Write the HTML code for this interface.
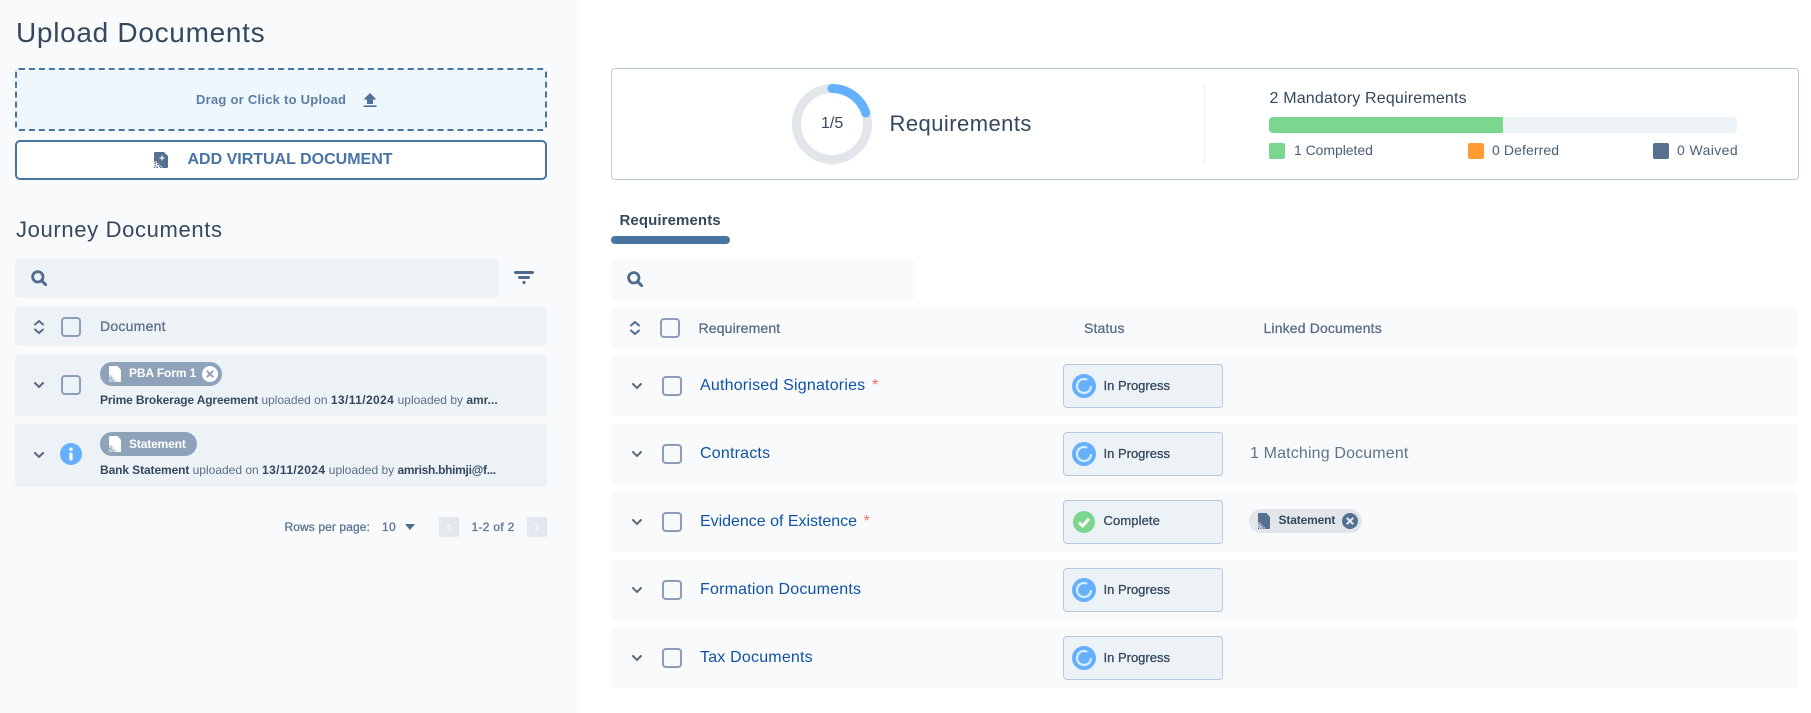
<!DOCTYPE html>
<html lang="en"><head><meta charset="utf-8"><title>Upload Documents</title>
<style>
html,body{margin:0;padding:0;background:#fff}
#p{position:relative;width:1811px;height:713px;overflow:hidden;background:#fff;font-family:"Liberation Sans",sans-serif;color:#34495e}
.b,.t,svg.i{position:absolute;box-sizing:border-box}
.t{white-space:nowrap;line-height:20px}
.cb{position:absolute;box-sizing:border-box;width:20px;height:20px;border:2px solid #8ba0b8;border-radius:4px}
.st{position:absolute;box-sizing:border-box;left:1063px;width:160px;height:44px;background:#edf2f7;border:1px solid #b7c8db;border-radius:4px}
.row{position:absolute;left:611px;width:1187px;height:60px;background:#f9fafc;border-radius:4px}
.lk{color:#0f52a8;font-size:16px;letter-spacing:.2px}
.stt{font-size:13px;color:#34495e;letter-spacing:0;-webkit-text-stroke:.3px #34495e}
.th{font-size:14px;letter-spacing:.15px;color:#5a6f87;-webkit-text-stroke:.3px #5a6f87}
.sub{font-size:12px;width:410px;overflow:hidden;letter-spacing:0;color:#5a6f87}
.sub b{color:#34495e}
.sub .d{letter-spacing:.4px}
</style></head><body><div id="p">
<svg width="0" height="0" style="position:absolute">
<defs>
<symbol id="doc" viewBox="0 0 12 16" preserveAspectRatio="none"><path d="M1 0H8.5L12 4V15Q12 16 11 16H7V14.2H5.5V12.8H4V11.2H2.5V9.6H0V1Q0 0 1 0Z" fill="currentColor"/><path d="M.3 10.4h1.5v1.5H.3zM2.6 11.8h1.4v1.4H2.6zM.3 13h1.5v1.4H.3zM4.2 13.4h1.2v1.3H4.2zM2 14.6h1.5V16H2zM5 14.8h1.5V16H5zM0 15h1V16H0z" fill="currentColor"/></symbol>
<symbol id="prog" viewBox="0 0 24 24"><circle cx="12" cy="12" r="12" fill="#64b0ff"/><circle cx="12" cy="12" r="7" fill="none" stroke="#dcecff" stroke-width="2.2" stroke-dasharray="36 8"/></symbol>
<symbol id="chev" viewBox="0 0 10 6"><path d="M1 1L5 5L9 1" fill="none" stroke="#5c6b7a" stroke-width="2" stroke-linecap="round" stroke-linejoin="round"/></symbol>
<symbol id="sort" viewBox="0 0 10 14"><path d="M1 4.5L5 1L9 4.5M1 9.5L5 13L9 9.5" fill="none" stroke="#4f6c8c" stroke-width="1.9" stroke-linecap="round" stroke-linejoin="round"/></symbol>
<symbol id="srch" viewBox="0 0 16 16"><circle cx="6.8" cy="6.8" r="5.2" fill="none" stroke="#4f6c8c" stroke-width="2.8"/><path d="M10.8 10.8L14.6 14.6" stroke="#4f6c8c" stroke-width="3" stroke-linecap="round"/></symbol>
</defs></svg>

<!-- left panel -->
<div class="b" style="left:0;top:0;width:579px;height:713px;background:#f9fafc"></div>
<div class="t" style="left:16px;top:22px;font-size:28px;line-height:22px;letter-spacing:.7px;color:#34495e">Upload Documents</div>
<div class="b" style="left:15px;top:68px;width:532px;height:63px;background:#eef6fe;border:2px dashed #4774a3;border-radius:4px"></div>
<div class="t" style="left:196px;top:90px;font-size:13px;font-weight:700;letter-spacing:.25px;color:#5b7ea3">Drag or Click to Upload</div>
<svg class="i" style="left:363px;top:93px" width="14" height="14" viewBox="0 0 14 14"><path d="M7 0L13.5 6.5H10V11H4V6.5H.5Z" fill="#4f7199"/><rect x=".5" y="12.4" width="13" height="1.6" fill="#4f7199"/></svg>
<div class="b" style="left:15px;top:140px;width:532px;height:40px;background:#fff;border:2px solid #4774a3;border-radius:5px"></div>
<svg class="i" style="left:154px;top:152px;color:#56708f" width="14" height="16" viewBox="0 0 14 16"><use href="#doc" width="14" height="16"/><path d="M8 3.5v5M5.5 6h5" stroke="#e8eef4" stroke-width="1.3"/></svg>
<div class="t" style="left:187.5px;top:150px;font-size:16px;font-weight:700;color:#4774a3">ADD VIRTUAL DOCUMENT</div>
<div class="t" style="left:16px;top:219.5px;font-size:22px;letter-spacing:.65px;color:#34495e">Journey Documents</div>

<div class="b" style="left:15px;top:258px;width:484px;height:40px;background:#edf2f7;border-radius:4px"></div>
<svg class="i" style="left:31px;top:270px" width="16" height="16"><use href="#srch"/></svg>
<svg class="i" style="left:514px;top:271px" width="20" height="13" viewBox="0 0 20 13"><rect width="20" height="3" rx="1.5" fill="#4f6c8c"/><rect x="4" y="5" width="12" height="3" rx="1.5" fill="#4f6c8c"/><circle cx="10" cy="11.5" r="1.6" fill="#4f6c8c"/></svg>

<div class="b" style="left:15px;top:306px;width:532px;height:40px;background:#edf2f7;border-radius:4px"></div>
<svg class="i" style="left:34px;top:320px" width="10" height="14"><use href="#sort"/></svg>
<div class="cb" style="left:61px;top:317px"></div>
<div class="t th" style="left:100px;top:315.5px;letter-spacing:.25px">Document</div>

<div class="b" style="left:15px;top:354px;width:532px;height:62px;background:#edf2f7;border-radius:4px"></div>
<svg class="i" style="left:34px;top:382px" width="10" height="6"><use href="#chev"/></svg>
<div class="cb" style="left:61px;top:375px"></div>
<div class="b" style="left:100px;top:362px;width:122px;height:24px;background:#8ea3b9;border-radius:12px"></div>
<svg class="i" style="left:109px;top:366px;color:#fff" width="12" height="16"><use href="#doc"/></svg>
<div class="t" style="left:129px;top:363px;font-size:12px;font-weight:700;color:#fff;letter-spacing:-.1px">PBA Form 1</div>
<svg class="i" style="left:202px;top:366px" width="16" height="16" viewBox="0 0 16 16"><circle cx="8" cy="8" r="8" fill="#fff"/><path d="M4.8 4.8L11.2 11.2M11.2 4.8L4.8 11.2" stroke="#8ea3b9" stroke-width="2"/></svg>
<div class="t sub" style="left:100px;top:390px">
<b style="letter-spacing:-.14px">Prime Brokerage Agreement</b> uploaded on <b class="d">13/11/2024</b> uploaded by <b>amr...</b></div>

<div class="b" style="left:15px;top:424px;width:532px;height:63px;background:#edf2f7;border-radius:4px"></div>
<svg class="i" style="left:34px;top:452px" width="10" height="6"><use href="#chev"/></svg>
<svg class="i" style="left:60px;top:443px" width="22" height="22" viewBox="0 0 22 22"><circle cx="11" cy="11" r="11" fill="#64b0ff"/><circle cx="11" cy="6.2" r="1.7" fill="#fff"/><rect x="9.4" y="9.5" width="3.2" height="8" rx="1" fill="#fff"/></svg>
<div class="b" style="left:100px;top:432px;width:97px;height:24px;background:#8ea3b9;border-radius:12px"></div>
<svg class="i" style="left:109px;top:436px;color:#fff" width="12" height="16"><use href="#doc"/></svg>
<div class="t" style="left:129px;top:434px;font-size:12px;font-weight:700;color:#fff;letter-spacing:-.15px">Statement</div>
<div class="t sub" style="left:100px;top:460px">
<b style="letter-spacing:-.1px">Bank Statement</b> uploaded on <b class="d">13/11/2024</b> uploaded by <b style="letter-spacing:-.3px">amrish.bhimji@f...</b></div>

<div class="t" style="left:284.5px;top:517px;font-size:12px;letter-spacing:.1px;color:#5a7597;-webkit-text-stroke:.3px #5a7597">Rows per page:</div>
<div class="t" style="left:382px;top:517px;font-size:12px;letter-spacing:.3px;color:#5a7597;-webkit-text-stroke:.3px #5a7597">10</div>
<svg class="i" style="left:405px;top:524px" width="10" height="6" viewBox="0 0 10 6"><path d="M0 0H10L5 6Z" fill="#4f6c8c"/></svg>
<div class="b" style="left:439px;top:517px;width:20px;height:20px;background:#e2e8ee;border-radius:2px"></div>
<svg class="i" style="left:446px;top:523px" width="6" height="9" viewBox="0 0 6 9"><path d="M5 1L1.5 4.5L5 8" fill="none" stroke="#f5f7fa" stroke-width="1.6"/></svg>
<div class="t" style="left:471.5px;top:517px;font-size:12px;letter-spacing:.3px;color:#5a7597;-webkit-text-stroke:.3px #5a7597">1-2 of 2</div>
<div class="b" style="left:527px;top:517px;width:20px;height:20px;background:#e2e8ee;border-radius:2px"></div>
<svg class="i" style="left:534px;top:523px" width="6" height="9" viewBox="0 0 6 9"><path d="M1 1L4.5 4.5L1 8" fill="none" stroke="#f5f7fa" stroke-width="1.6"/></svg>

<!-- summary card -->
<div class="b" style="left:611px;top:68px;width:1188px;height:112px;border:1px solid #b9c7d6;border-radius:4px"></div>
<svg class="i" style="left:792px;top:84px" width="80" height="80" viewBox="0 0 80 80"><circle cx="40" cy="40" r="35.5" fill="none" stroke="#e2e6eb" stroke-width="9"/><path d="M40 4.5A35.5 35.5 0 0 1 73.8 29" fill="none" stroke="#64b0ff" stroke-width="9" stroke-linecap="round"/></svg>
<div class="t" style="left:821px;top:113.5px;font-size:16px;color:#34495e">1/5</div>
<div class="t" style="left:889.5px;top:114px;font-size:22px;letter-spacing:.45px;color:#34495e">Requirements</div>
<div class="b" style="left:1204px;top:83px;width:1px;height:81px;background:#eef0f3"></div>
<div class="t" style="left:1269.5px;top:88.5px;font-size:16px;letter-spacing:.18px;color:#34495e">2 Mandatory Requirements</div>
<div class="b" style="left:1269px;top:117px;width:468px;height:16px;background:#edf2f7;border-radius:4px"></div>
<div class="b" style="left:1269px;top:117px;width:234px;height:16px;background:#7bd68f;border-radius:4px 0 0 4px"></div>
<div class="b" style="left:1269px;top:143px;width:16px;height:16px;background:#7bd68f;border-radius:2px"></div>
<div class="t" style="left:1294px;top:140px;font-size:14px;letter-spacing:-.05px;color:#4a5f78">1 Completed</div>
<div class="b" style="left:1468px;top:143px;width:16px;height:16px;background:#fe9b33;border-radius:2px"></div>
<div class="t" style="left:1492px;top:140px;font-size:14px;letter-spacing:.1px;color:#4a5f78">0 Deferred</div>
<div class="b" style="left:1653px;top:143px;width:16px;height:16px;background:#56708f;border-radius:2px"></div>
<div class="t" style="left:1677px;top:140px;font-size:14px;letter-spacing:.4px;color:#4a5f78">0 Waived</div>

<!-- tab -->
<div class="t" style="left:619.5px;top:210.5px;font-size:15px;font-weight:700;letter-spacing:.1px;color:#34495e">Requirements</div>
<div class="b" style="left:611px;top:236px;width:119px;height:8px;background:#4774a3;border-radius:4px"></div>

<!-- table -->
<div class="b" style="left:611px;top:260px;width:304px;height:40px;background:#f9fafc;border-radius:4px"></div>
<svg class="i" style="left:627px;top:271px" width="16" height="16"><use href="#srch"/></svg>
<div class="b" style="left:611px;top:308px;width:1187px;height:40px;background:#f9fafc;border-radius:4px"></div>
<svg class="i" style="left:630px;top:321px" width="10" height="14"><use href="#sort"/></svg>
<div class="cb" style="left:660px;top:318px"></div>
<div class="t th" style="left:698.5px;top:317.5px">Requirement</div>
<div class="t th" style="left:1084px;top:317.5px">Status</div>
<div class="t th" style="left:1263.5px;top:317.5px">Linked Documents</div>

<!-- row 1 -->
<div class="row" style="top:356px"></div>
<svg class="i" style="left:632px;top:383px" width="10" height="6"><use href="#chev"/></svg>
<div class="cb" style="left:662px;top:376px"></div>
<div class="t lk" style="left:700px;top:376px">Authorised Signatories <span style="color:#f96a6a;margin-left:2px">*</span></div>
<div class="st" style="top:364px"></div>
<svg class="i" style="left:1072px;top:374px" width="24" height="24"><use href="#prog"/></svg>
<div class="t stt" style="left:1103.5px;top:375.5px">In Progress</div>

<!-- row 2 -->
<div class="row" style="top:424px"></div>
<svg class="i" style="left:632px;top:451px" width="10" height="6"><use href="#chev"/></svg>
<div class="cb" style="left:662px;top:444px"></div>
<div class="t lk" style="left:700px;top:444px">Contracts</div>
<div class="st" style="top:432px"></div>
<svg class="i" style="left:1072px;top:442px" width="24" height="24"><use href="#prog"/></svg>
<div class="t stt" style="left:1103.5px;top:443.5px">In Progress</div>
<div class="t" style="left:1250px;top:444px;font-size:16px;letter-spacing:.15px;color:#5f7488">1 Matching Document</div>

<!-- row 3 -->
<div class="row" style="top:492px"></div>
<svg class="i" style="left:632px;top:519px" width="10" height="6"><use href="#chev"/></svg>
<div class="cb" style="left:662px;top:512px"></div>
<div class="t lk" style="left:700px;top:512px;letter-spacing:-.02px">Evidence of Existence <span style="color:#f96a6a;margin-left:2px">*</span></div>
<div class="st" style="top:500px"></div>
<svg class="i" style="left:1073px;top:511px" width="22" height="22" viewBox="0 0 22 22"><circle cx="11" cy="11" r="11" fill="#7bd68f"/><path d="M6 11.5L9.5 15L16 7.8" fill="none" stroke="#fff" stroke-width="3"/></svg>
<div class="t stt" style="left:1103.5px;top:511px;letter-spacing:.1px">Complete</div>
<div class="b" style="left:1249px;top:509px;width:113px;height:24px;background:#e2e6eb;border-radius:12px"></div>
<svg class="i" style="left:1258px;top:513px;color:#56708f" width="12" height="16"><use href="#doc"/></svg>
<div class="t" style="left:1278.5px;top:510px;font-size:12px;font-weight:700;letter-spacing:-.15px;color:#34495e">Statement</div>
<svg class="i" style="left:1342px;top:513px" width="16" height="16" viewBox="0 0 16 16"><circle cx="8" cy="8" r="8" fill="#56708f"/><path d="M4.8 4.8L11.2 11.2M11.2 4.8L4.8 11.2" stroke="#e8edf2" stroke-width="2"/></svg>

<!-- row 4 -->
<div class="row" style="top:560px"></div>
<svg class="i" style="left:632px;top:587px" width="10" height="6"><use href="#chev"/></svg>
<div class="cb" style="left:662px;top:580px"></div>
<div class="t lk" style="left:700px;top:580px">Formation Documents</div>
<div class="st" style="top:568px"></div>
<svg class="i" style="left:1072px;top:578px" width="24" height="24"><use href="#prog"/></svg>
<div class="t stt" style="left:1103.5px;top:579.5px">In Progress</div>

<!-- row 5 -->
<div class="row" style="top:628px"></div>
<svg class="i" style="left:632px;top:655px" width="10" height="6"><use href="#chev"/></svg>
<div class="cb" style="left:662px;top:648px"></div>
<div class="t lk" style="left:700px;top:648px">Tax Documents</div>
<div class="st" style="top:636px"></div>
<svg class="i" style="left:1072px;top:646px" width="24" height="24"><use href="#prog"/></svg>
<div class="t stt" style="left:1103.5px;top:647.5px">In Progress</div>
</div></body></html>
